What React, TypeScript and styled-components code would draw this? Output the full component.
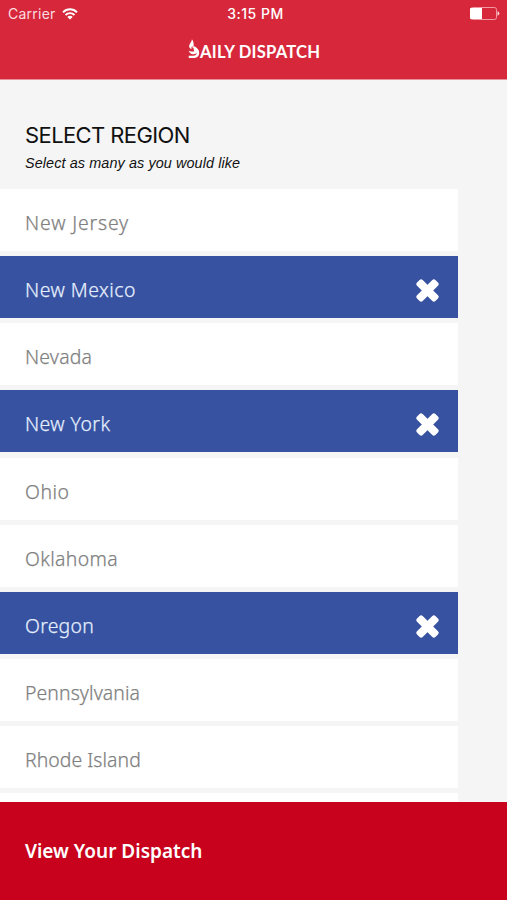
import React from "react";
import styled, { createGlobalStyle } from "styled-components";

const GlobalStyle = createGlobalStyle`
  * { box-sizing: border-box; }
  body { margin: 0; background: #f5f5f5; }
`;

const Screen = styled.div`
  width: 507px;
  height: 900px;
  overflow: hidden;
  display: flex;
  flex-direction: column;
  background: #f5f5f5;
  font-family: "Noto Sans", sans-serif;
`;

const Header = styled.header`
  flex: none;
  height: 79px;
  background: #d7283b;
  color: #fff;
  box-shadow: 0 1px 0 #e98f99;
`;

const StatusBar = styled.div`
  height: 27px;
  padding: 0 7px 0 8px;
  display: grid;
  grid-template-columns: 1fr auto 1fr;
  align-items: center;
  font: 400 14px/27px Inter, sans-serif;
`;

const Carrier = styled.div`
  display: flex;
  align-items: center;
  gap: 6px;
  color: #fbdde0;
  letter-spacing: 0.25px;
`;

const Clock = styled.div`
  padding-left: 3px;
  font-weight: 500;
  letter-spacing: 0.5px;
`;

const BatterySlot = styled.div`
  display: flex;
  justify-content: flex-end;
`;

const Brand = styled.div`
  display: flex;
  align-items: flex-end;
  height: 32px;
  padding-left: 188px;
`;

const BrandName = styled.span`
  font: 700 16.6px/13px Lato, sans-serif;
  letter-spacing: 0.22px;
  white-space: nowrap;
`;

const Intro = styled.section`
  flex: none;
  height: 109.8px;
  padding: 43px 25px 0;
  color: #111;
`;

const Title = styled.h1`
  margin: 0;
  font: 400 22px/26px Inter, sans-serif;
  letter-spacing: -0.6px;
`;

const Hint = styled.p`
  margin: 5px 0 0;
  font: italic 400 14.4px/20px "Liberation Sans", sans-serif;
  letter-spacing: 0.1px;
`;

const RegionList = styled.ul`
  flex: 1;
  min-height: 0;
  width: 458px;
  margin: 0;
  padding: 0;
  list-style: none;
  display: flex;
  flex-direction: column;
  gap: 5.2px;
  overflow: hidden;
`;

const Region = styled.li<{ $selected?: boolean }>`
  flex: none;
  height: 62px;
  padding: 6px 19px 0 25px;
  display: flex;
  align-items: center;
  justify-content: space-between;
  background: ${(p) => (p.$selected ? "#3652a0" : "#fff")};
  color: ${(p) => (p.$selected ? "#e6efff" : "#808080")};
`;

const RegionName = styled.span<{ $tracking: number }>`
  font-size: 19.4px;
  font-weight: 300;
  line-height: 26px;
  letter-spacing: ${(p) => p.$tracking}px;
  -webkit-text-stroke: 0.25px currentColor;
`;

const Action = styled.button`
  flex: none;
  height: 98px;
  border: 0;
  padding: 0 25px;
  text-align: left;
  background: #c8021d;
  color: #fff;
  font: 600 19px/26px "Noto Sans", sans-serif;
  letter-spacing: 0px;
`;

const regions = [
  { name: "New Jersey", tracking: 0.85 },
  { name: "New Mexico", tracking: 0.5, selected: true },
  { name: "Nevada", tracking: 0.2 },
  { name: "New York", tracking: 0.45, selected: true },
  { name: "Ohio", tracking: 0.5 },
  { name: "Oklahoma", tracking: 0.35 },
  { name: "Oregon", tracking: 0.25, selected: true },
  { name: "Pennsylvania", tracking: 0.1 },
  { name: "Rhode Island", tracking: 0.05 },
  { name: "", tracking: 0 },
];

const WifiIcon = () => (
  <svg width="16" height="12" viewBox="0 0 16 12" fill="none" stroke="#fff" strokeWidth="1.9">
    <path d="M1 4.3C5 .3 11 .3 15 4.3" />
    <path d="M3.5 7C6 4.5 10 4.5 12.5 7" />
    <path d="M8 11.6 5.3 8.9C6.8 7.5 9.2 7.5 10.7 8.9Z" fill="#fff" stroke="none" />
  </svg>
);

const BatteryIcon = () => (
  <svg width="31" height="13" viewBox="0 0 31 13">
    <rect x="1.5" y=".5" width="26" height="12" rx="2" fill="none" stroke="#f09aa3" />
    <path d="M2 1h11v11H2a1 1 0 0 1-1-1V2a1 1 0 0 1 1-1Z" fill="#fff" />
    <path d="M28.5 4.3c2.5.8 2.5 3.6 0 4.4Z" fill="#fbd5d9" />
  </svg>
);

const FlameIcon = () => (
  <svg width="12" height="20" viewBox="0 0 12 20">
    <path
      d="M3.9.3C3.8 3.2 1 4.8 1.2 7.6c.1 1.5 1.1 2.4 2.5 2.7C2.9 8.9 3.7 8 4.2 7c.5 1 .3 1.8.8 2.5.8-.6 1-1.5.9-2.5 2.9 1.5 5.3 3.5 5.3 6.7 0 3.3-2.4 5.3-5.700 5.300H.7v-2.300h4.500c2.200 0 3.500-1.100 3.500-2.900-.6 1-2 1.600-3.500 1.400C3 15 1.300 13.800.6 11.400c1.300 1.100 3.400 1.500 5.800.8C4.500 9 7.200 4.200 3.900.3Z"
      fill="#fff"
    />
  </svg>
);

const CrossIcon = () => (
  <svg width="23" height="24" viewBox="0 -1 23 24" fill="#fff">
    <rect x="-1.5" y="7.500" width="26" height="8" rx="2.200" transform="rotate(45 11.5 11.5)" />
    <rect x="-1.5" y="7.500" width="26" height="8" rx="2.200" transform="rotate(-45 11.5 11.5)" />
  </svg>
);

export default function App() {
  return (
    <>
      <GlobalStyle />
      <Screen>
        <Header>
          <StatusBar>
            <Carrier>
              Carrier <WifiIcon />
            </Carrier>
            <Clock>3:15 PM</Clock>
            <BatterySlot>
              <BatteryIcon />
            </BatterySlot>
          </StatusBar>
          <Brand>
            <FlameIcon />
            <BrandName>AILY DISPATCH</BrandName>
          </Brand>
        </Header>
        <Intro>
          <Title>SELECT REGION</Title>
          <Hint>Select as many as you would like</Hint>
        </Intro>
        <RegionList>
          {regions.map((r) => (
            <Region key={r.name} $selected={r.selected}>
              <RegionName $tracking={r.tracking}>{r.name}</RegionName>
              {r.selected && <CrossIcon />}
            </Region>
          ))}
        </RegionList>
        <Action>View Your Dispatch</Action>
      </Screen>
    </>
  );
}
